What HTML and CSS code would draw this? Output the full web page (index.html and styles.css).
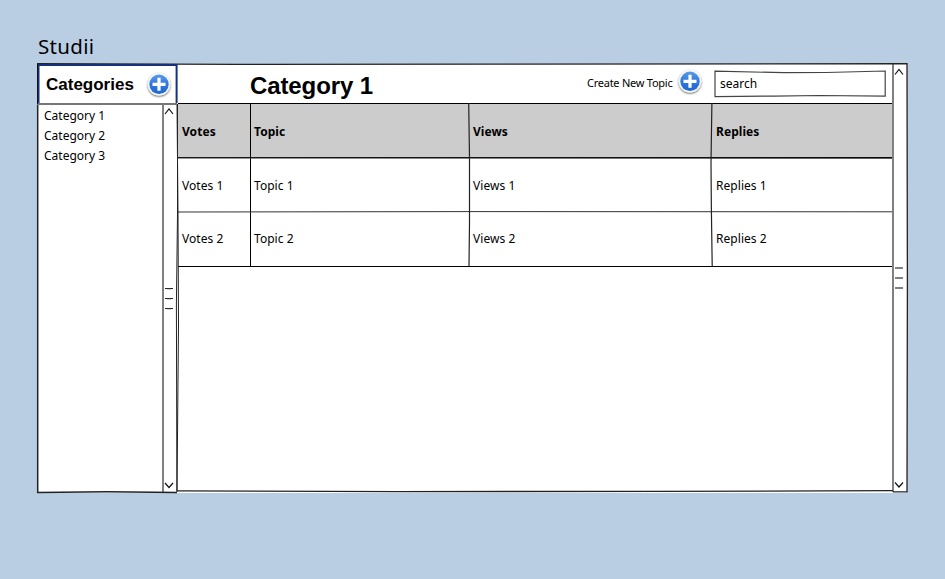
FILE: index.html
```html
<!DOCTYPE html>
<html lang="en">
<head>
<meta charset="utf-8">
<title>Studii</title>
<link rel="stylesheet" href="styles.css">
</head>
<body>
<svg class="defs" width="0" height="0" aria-hidden="true">
  <defs>
    <linearGradient id="blue" x1="0" y1="0" x2="0" y2="1"><stop offset="0" stop-color="#5c9ae8"/><stop offset=".5" stop-color="#3079dc"/><stop offset="1" stop-color="#1f66d3"/></linearGradient>
    <filter id="shade" x="-20%" y="-20%" width="140%" height="150%"><feDropShadow dx="0" dy="1" stdDeviation=".9" flood-color="#000" flood-opacity=".65"/></filter>
    <symbol id="add" viewBox="0 0 26 26">
      <circle cx="13" cy="12.3" r="11.2" fill="#f8f8f8" filter="url(#shade)"/>
      <circle cx="13" cy="12.3" r="9.7" fill="url(#blue)"/>
      <path d="M13 5.8v13M6.5 12.3h13" stroke="#fff" stroke-width="3.2"/>
    </symbol>
  </defs>
</svg>
<h1 class="app-title">Studii</h1>
<div class="window">
  <aside class="sidebar">
    <header class="side-head"><h2>Categories</h2><svg class="add"><use href="#add"/></svg></header>
    <div class="side-body">
      <ul class="list"><li>Category 1</li><li>Category 2</li><li>Category 3</li></ul>
      <svg class="side-scroll" viewBox="0 0 16 388" fill="none">
        <path d="M1 0V388" stroke="#808080" stroke-width="2"/>
        <path d="M3 10 7 5 11 10M3 379 7 383.5 11 379" stroke="#111" stroke-width="1.2"/>
        <path d="M3 184.5h8M3 194.5h8M3 204.5h8" stroke="#222"/>
        <path d="M5 185.3h4M5 195.3h4M5 205.3h4" stroke="#999" stroke-width=".6"/>
      </svg>
    </div>
  </aside>
  <main class="main">
    <header class="topbar">
      <h2>Category 1</h2>
      <span class="create">Create New Topic</span>
      <svg class="add"><use href="#add"/></svg>
      <div class="search">search
        <svg viewBox="0 0 172 28" fill="none" stroke="#444" stroke-width="1.2"><path d="M1 1.2 70 2.7 112 2.5 171.2 1V26.2L105 25.5 60 26.1 1 26.6Z"/></svg>
      </div>
    </header>
    <div class="table">
      <div class="row head"><span>Votes</span><span>Topic</span><span>Views</span><span>Replies</span></div>
      <div class="row"><span>Votes 1</span><span>Topic 1</span><span>Views 1</span><span>Replies 1</span></div>
      <div class="row"><span>Votes 2</span><span>Topic 2</span><span>Views 2</span><span>Replies 2</span></div>
      <svg class="rules" viewBox="0 0 714 164" fill="none" stroke="#000">
        <path d="M0 .5H714M0 54.5H714M0 163.5H714M72.5 0V163.5"/>
        <path d="M0 55 714 55.3M0 109 290 108.6 714 108.8" stroke="#333"/>
        <path d="M290.7 0 291.5 54 291.5 120 291 163M533.9 0 533 60 533.4 108 534.2 163" stroke="#222" stroke-width="1.2"/>
      </svg>
    </div>
  </main>
  <svg class="page-scroll" viewBox="0 0 15 429" fill="none">
    <path d="M1 0V428" stroke="#808080" stroke-width="2"/>
    <path d="M3 10.5 7 5.5 11 10.5M3 418.5 7 423 11 418.5" stroke="#111" stroke-width="1.2"/>
    <path d="M3 204h8M3 214h8M3 224h8" stroke="#808080" stroke-width="2"/>
  </svg>
  <svg class="frame" viewBox="0 0 871 430" fill="none" stroke="#222">
    <path d="M0 -.3 200 .4 450 .2 870 -.3 870.4 220 870 427.8H856M140 426.8 360 427.6 620 427.4 856 426.7" stroke-width="1.3"/>
    <path d="M.7 40V428.4L70 427.8 140 428.4" stroke-width="1.5"/>
    <path d="M140.5 40 140.5 150 139.4 240 139.9 428M140 40 141 150 141.5 260 140 427" stroke-width="1"/>
    <path d="M0 40H140" stroke="#777" stroke-width="1.8"/>
    <path d="M1.5 39V1H139.6V39" stroke="#17307c" stroke-width="2"/>
    <path d="M.5 40V0" stroke="#111"/>
  </svg>
</div>
</body>
</html>
```

FILE: styles.css
```css
* { box-sizing: border-box; }
body {
  margin: 0;
  height: 579px;
  padding: 32px 37px 0;
  overflow: hidden;
  background: #b9cde3;
  color: #000;
  font: 12px/20px "Comic Sans MS", "Noto Sans", sans-serif;
}
h1, h2, ul { margin: 0; padding: 0; font-weight: normal; }
svg { display: block; }
.defs { position: absolute; }
.app-title { height: 32px; padding-left: 1px; font-size: 20.5px; line-height: 28px; letter-spacing: .3px; }
.window {
  position: relative;
  display: grid;
  grid-template-columns: 141px 714px 15px;
  width: 870px;
  height: 428px;
}
.sidebar, .main { display: flex; flex-direction: column; background: #fff; }
.side-head { display: flex; align-items: center; gap: 12px; height: 40px; padding-left: 9px; }
.side-head h2 { font: bold 17px/20px "Liberation Sans", Arial, sans-serif; width: 88px; padding-top: 1px; }
.add { width: 26px; height: 26px; flex: none; overflow: visible; }
.side-head .add { margin-top: 2px; }
.side-body { display: flex; justify-content: space-between; flex: 1; }
.list { list-style: none; padding: 2px 0 0 7px; }
.side-scroll { width: 16px; height: 388px; }
.topbar { display: flex; height: 39px; padding-left: 72px; }
.topbar h2 { width: 337px; font: bold 24px/44px "Liberation Sans", Arial, sans-serif; letter-spacing: -.1px; }
.create { width: 90px; font-size: 11px; line-height: 38px; letter-spacing: -.25px; white-space: nowrap; }
.topbar .add { margin: 5px 0 0; }
.search { position: relative; width: 172px; height: 28px; margin: 6px 0 0 11px; padding-left: 6px; line-height: 27px; }
.search svg { position: absolute; inset: 0; width: 172px; height: 28px; }
.table { position: relative; height: 164px; }
.row { display: grid; grid-template-columns: 72px 219px 243px 180px; height: 54px; line-height: 57px; }
.row:nth-child(3) { line-height: 55px; }
.row span { padding-left: 4px; letter-spacing: .05px; }
.row.head { background: #ccc; font-weight: bold; height: 55px; margin-bottom: -1px; letter-spacing: -.1px; }
.rules { position: absolute; top: 0; left: 0; width: 714px; height: 164px; }
.page-scroll { width: 15px; height: 429px; background: #fff; }
.frame { position: absolute; top: 0; left: 0; width: 871px; height: 430px; overflow: visible; }
```
